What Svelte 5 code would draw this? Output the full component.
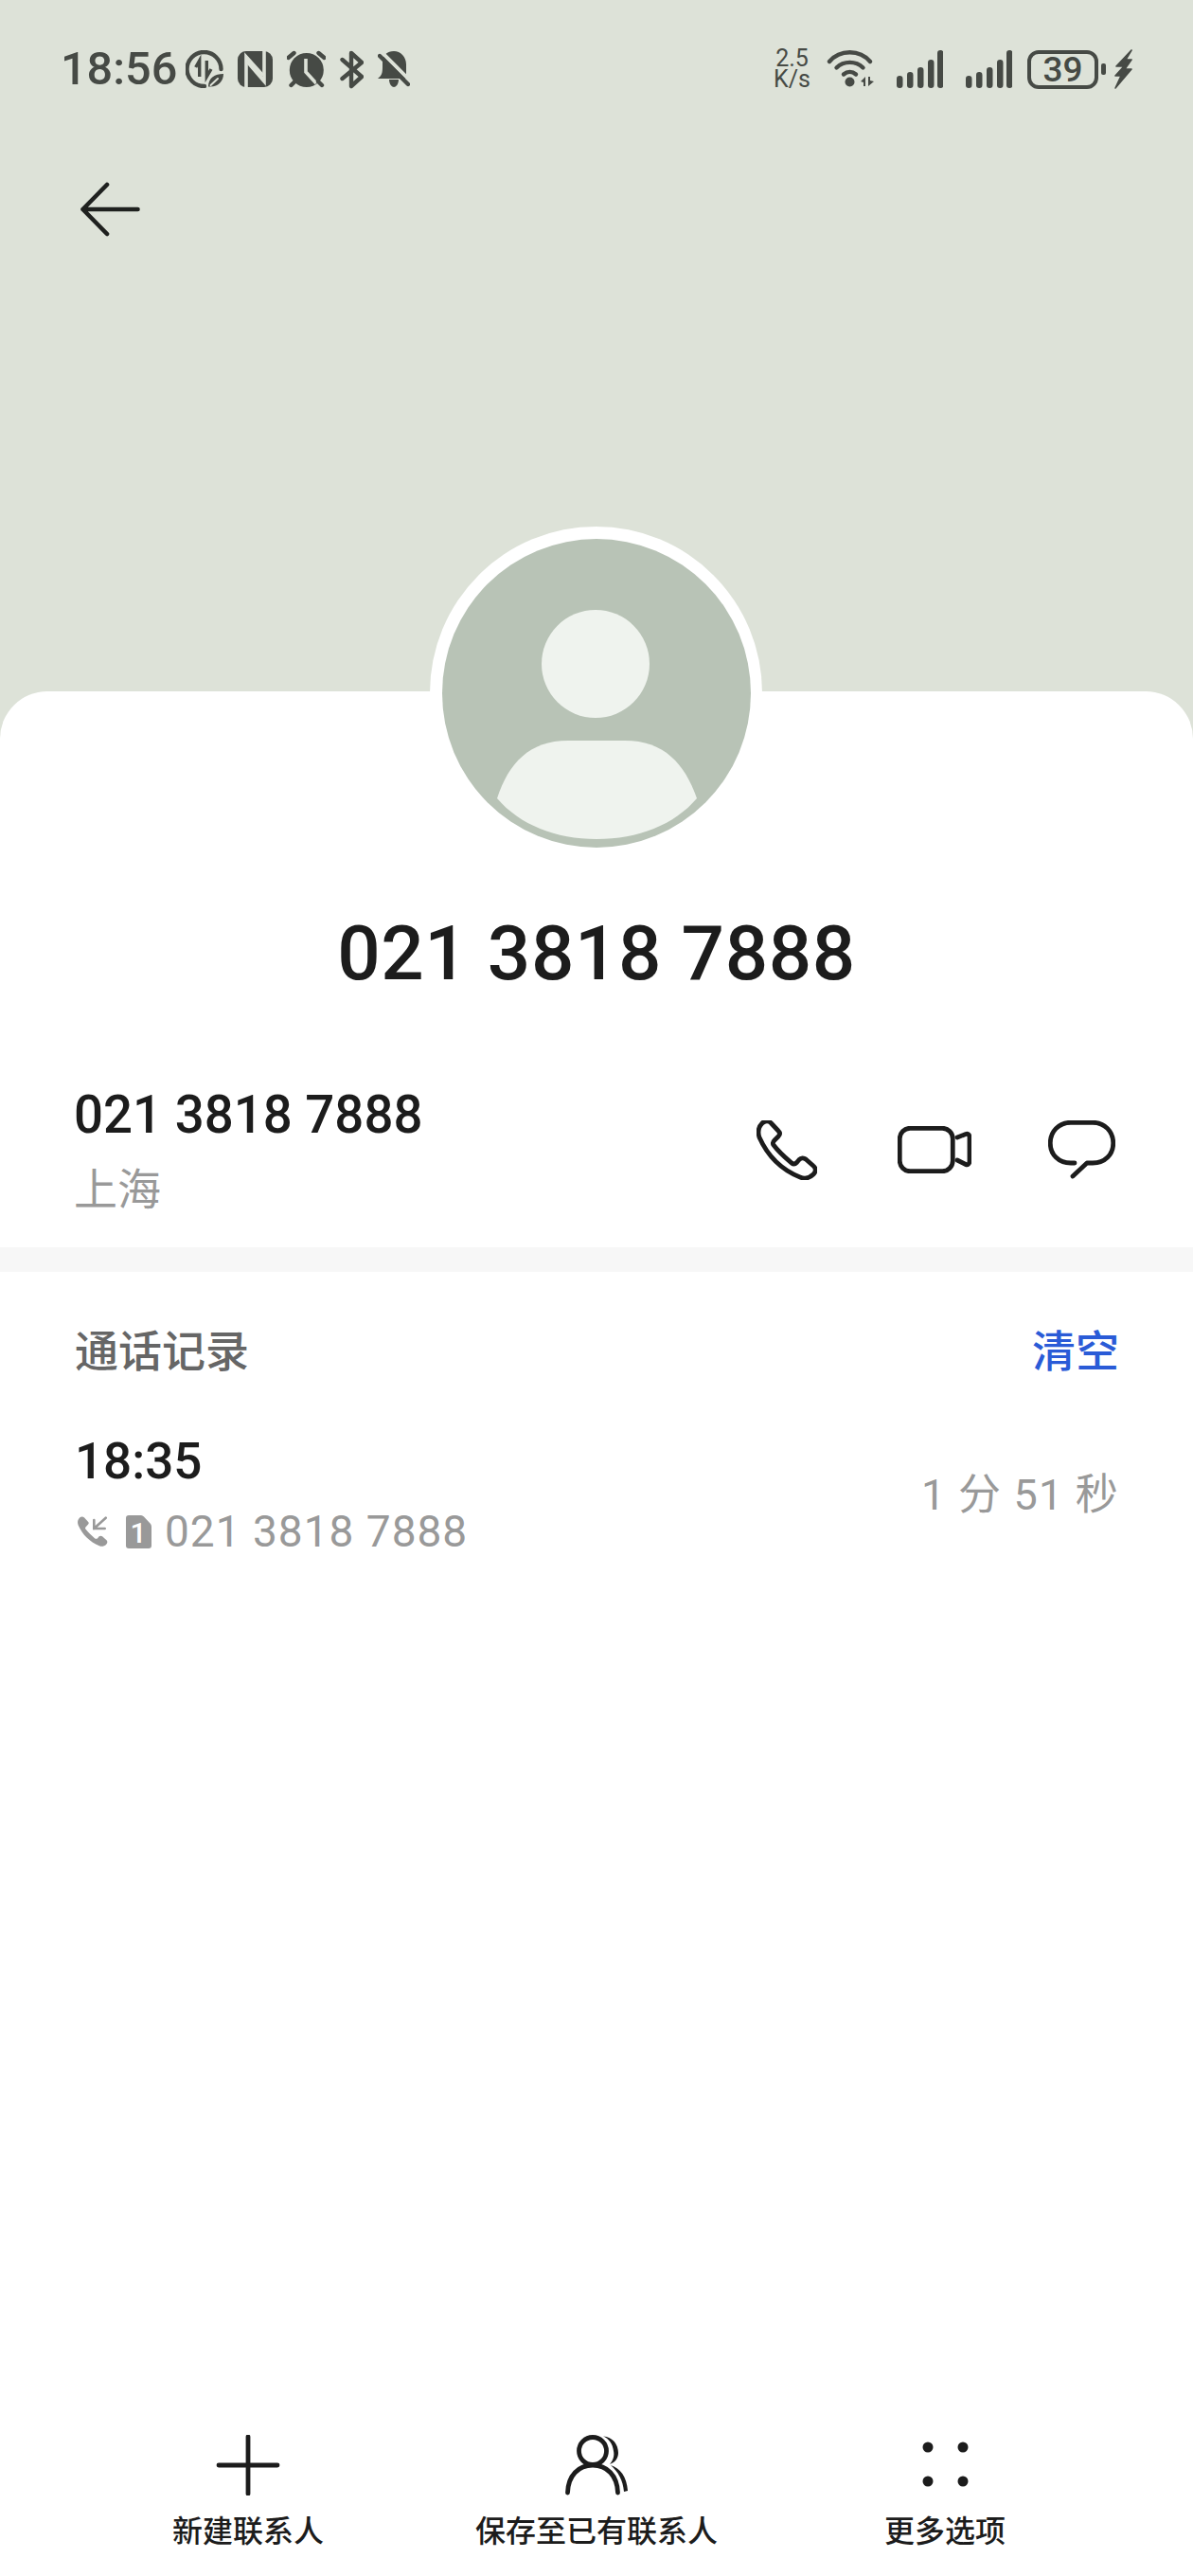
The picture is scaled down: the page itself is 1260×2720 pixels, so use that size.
<script>
	const handset =
		'M6 3C9 0 13 0 15.5 3L23 11C25 13 25 15 23 17L19 21C17 23 17 25 18 26C24 34 30 39 37 45C39 46.5 41 46 42.5 44.5L45 41.5C47 39.5 50 39.5 52 41L60 48C63 50.5 63 54 60 57C56 61 51 62 46 60C26 52 12 38 3 18C1 12 2 7 6 3Z';
	const signalBars = [
		{ x: 0, h: 13 },
		{ x: 11, h: 17 },
		{ x: 22, h: 22 },
		{ x: 33, h: 30 },
		{ x: 43, h: 40 }
	];
	const actions = [
		{ id: 'new', label: '新建联系人' },
		{ id: 'save', label: '保存至已有联系人' },
		{ id: 'more', label: '更多选项' }
	];
	const number = '021 3818 7888';
</script>

{#snippet signal()}
	<svg class="ink" width="49" height="40" viewBox="0 0 49 40">
		{#each signalBars as bar}
			<rect x={bar.x} y={40 - bar.h} width="6.5" height={bar.h} rx="3.2" />
		{/each}
	</svg>
{/snippet}

<div class="page">
	<header class="top">
		<div class="status">
			<span class="clock">18:56</span>
			<svg class="saver" width="40" height="40" viewBox="0 0 40 40">
				<path class="line" d="M37.5 20A18 18 0 1 0 20 38" />
				<path class="line thin" d="M10.7 18L14.7 11V28" />
				<path class="line thin" d="M22.3 11V28L27 20" />
				<path class="solid" d="M24 38.5C24 29 31 25 40 25C40 33 34 39.5 24 38.5Z" />
				<path class="cut" d="M26.5 37L34 30" />
			</svg>
			<svg class="nfc" width="37" height="38" viewBox="0 0 37 38">
				<rect class="solid" width="37" height="38" rx="9" />
				<path class="cut wide" d="M9 38V6L27 26" />
				<path class="cut wide" d="M28 0V32L10 11" />
			</svg>
			<svg class="alarm" width="41" height="40" viewBox="0 0 41 40">
				<circle class="solid" cx="20.8" cy="21" r="18" />
				<path class="cut wide" d="M20 9V23L31 35" />
				<path class="line" d="M1.5 8L7.5 3M39.5 8L33.5 3" />
				<path class="line" d="M4.5 37L8.5 33M37 37L33 33" />
			</svg>
			<svg class="bt" width="25" height="41" viewBox="0 0 25 41">
				<path class="line" d="M2.5 10L23 28L12 38V3L23 13L2.5 30" />
			</svg>
			<svg class="bell" width="34" height="40" viewBox="0 0 34 40">
				<path class="solid" d="M17 1C24 1 30 7 30 15V30H0C4 27 5 24 5 18V10C5 6 10 1 17 1Z" />
				<path class="solid" d="M12 31H22C22 36 19 39 17 39C15 39 12 36 12 31Z" />
				<path class="cut wider" d="M0 -2L40 38" />
				<path class="line" d="M2 6L32 36" />
			</svg>

			<span class="speed"><span>2.5</span><span>K/s</span></span>
			<svg class="wifi" width="50" height="40" viewBox="0 0 50 40">
				<path class="line" d="M3 12C14 -1 35 -1 46 12" />
				<path class="line" d="M10.5 18.5C18 11 31 11 38.5 18.5" />
				<path class="line" d="M18 25.5C22 22 27 22 31 25.5" />
				<circle class="solid" cx="24.5" cy="33.5" r="5" />
				<path class="solid" d="M36 33L41 28V38H39V34ZM44 28H46V32L50 33L44 38Z" />
			</svg>
			{@render signal()}
			{@render signal()}
			<span class="battery">39</span>
			<span class="nub"></span>
			<svg class="bolt" width="19" height="42" viewBox="0 0 19 42">
				<path class="solid bolt-shape" d="M18 1L2 18H10L1 28H7L1 41L18 21H11L18 11H12Z" />
			</svg>
		</div>

		<button class="back" aria-label="返回">
			<svg width="63" height="58" viewBox="0 0 63 58">
				<path d="M28 3L2.5 29L28 55M2.5 29H60.5" />
			</svg>
		</button>
	</header>

	<main class="card">
		<div class="avatar-ring">
			<svg class="avatar" width="326" height="326" viewBox="0 0 326 326">
				<circle cx="163" cy="163" r="163" fill="#b8c3b6" />
				<circle cx="162" cy="132" r="57" fill="#eff3ee" />
				<path
					d="M58 274C70 237 92 213 133 213H193C234 213 256 237 269 274C245 302 207 317 163 317C120 317 82 302 58 274Z"
					fill="#eff3ee"
				/>
			</svg>
		</div>

		<h1>{number}</h1>

		<section class="contact">
			<div>
				<div class="phone">{number}</div>
				<div class="place">上海</div>
			</div>
			<div class="contact-actions">
				<svg class="stroke" width="64" height="63" viewBox="0 0 64 63">
					<path d={handset} />
				</svg>
				<svg class="stroke video" width="78" height="50" viewBox="0 0 78 50">
					<rect x="2.25" y="2.25" width="56" height="45.5" rx="11" />
					<path d="M63 12L72 8.5C75 7.5 76 10 76 12V37C76 40 74 41.5 72 40.5L63 36" />
				</svg>
				<svg class="stroke chat" width="71" height="62" viewBox="0 0 71 62">
					<path d="M28 45H24C11 45 2.25 36 2.25 24C2.25 12 11 2.25 24 2.25H47C60 2.25 68.75 12 68.75 24C68.75 36 60 45 47 45H41L26 59" />
				</svg>
			</div>
		</section>

		<div class="divider"></div>

		<section class="log">
			<div class="log-head">
				<h2>通话记录</h2>
				<span class="clear">清空</span>
			</div>
			<div class="log-row">
				<div>
					<div class="log-time">18:35</div>
					<div class="log-number">
						<svg class="incoming" width="33" height="33" viewBox="0 0 33 33">
							<path d={handset} transform="scale(.52)" />
							<path class="arrow" d="M30.7 1.7L18.3 13M18.3 4V13H29.7" />
						</svg>
						<svg class="sim" width="27" height="35" viewBox="0 0 27 35">
							<path d="M3 0H16C17 0 18 .5 19 1.5L26 9C26.7 10 27 11 27 12V32C27 34 26 35 24 35H3C1 35 0 34 0 32V3C0 1 1 0 3 0Z" />
							<text x="13" y="29" text-anchor="middle">1</text>
						</svg>
						<span>{number}</span>
					</div>
				</div>
				<div class="duration">1 分 51 秒</div>
			</div>
		</section>
	</main>

	<nav class="actions">
		{#each actions as action}
			<button>
				<svg class="stroke" width="70" height="64" viewBox="0 0 70 64">
					{#if action.id === 'new'}
						<path d="M35 2V62M4 32H66" />
					{:else if action.id === 'save'}
						<circle cx="31" cy="17" r="14.5" />
						<path d="M4.5 61C5 43 16 32 31 32C46 32 57 43 57.5 61" />
						<path class="crescent" d="M42 1.5C52 2 58 10 58 19C58 24 55 29 49 31C53 26 54 22 53 17C52 9 48 4 42 1.5Z" />
						<path class="crescent" d="M50 32C60 35 67 44 68 59L64 60C63 48 58 39 50 32Z" />
					{:else}
						<circle class="dot" cx="17" cy="13" r="5.5" />
						<circle class="dot" cx="54" cy="13" r="5.5" />
						<circle class="dot" cx="17" cy="49" r="5.5" />
						<circle class="dot" cx="54" cy="49" r="5.5" />
					{/if}
				</svg>
				<span>{action.label}</span>
			</button>
		{/each}
	</nav>
</div>

<style>
	:global(body) {
		background: #fff;
	}

	.page {
		display: flex;
		flex-direction: column;
		min-height: 2720px;
		background: #dde2d8;
		font-family: Roboto, 'Noto Sans CJK SC', sans-serif;
		color: #1c1c1c;
	}

	.top {
		height: 730px;
		box-sizing: border-box;
		padding-top: 51px;
	}

	.status {
		display: flex;
		align-items: center;
		height: 44px;
		padding: 0 64px 0 64px;
		color: #464a45;
	}

	.clock {
		width: 122px;
		margin-right: 10px;
		font-size: 48.6px;
		font-weight: 500;
		line-height: 44px;
	}

	.status svg {
		flex: none;
	}

	.solid {
		fill: #464a45;
	}

	.bolt-shape {
		stroke: #464a45;
		stroke-width: 1.6;
		stroke-linejoin: round;
	}

	.line {
		fill: none;
		stroke: #464a45;
		stroke-width: 4.4;
		stroke-linecap: round;
		stroke-linejoin: round;
	}

	.line.thin {
		stroke-width: 3.4;
		stroke-linecap: butt;
		stroke-linejoin: miter;
	}

	.cut {
		fill: none;
		stroke: #dde2d8;
		stroke-width: 2;
		stroke-linecap: round;
	}

	.cut.wide {
		stroke-width: 3.6;
		stroke-linecap: butt;
	}

	.cut.wider {
		stroke-width: 4;
		stroke-linecap: butt;
	}

	.ink {
		fill: #464a45;
		margin-left: 24px;
	}

	.nfc,
	.alarm,
	.bt,
	.bell {
		margin-left: 15px;
	}

	.speed {
		display: flex;
		flex-direction: column;
		align-items: center;
		margin-left: auto;
		font-size: 25px;
		line-height: 22px;
	}

	.wifi {
		margin-left: 17px;
	}

	.battery {
		box-sizing: border-box;
		width: 75px;
		height: 41px;
		margin-left: 16px;
		border: 4px solid #464a45;
		border-radius: 12px;
		font-size: 37px;
		font-weight: 500;
		line-height: 33px;
		text-align: center;
	}

	.nub {
		width: 5px;
		height: 12px;
		margin-left: 3px;
		border-radius: 2px;
		background: #464a45;
	}

	.bolt {
		margin-left: 9px;
	}

	button {
		padding: 0;
		border: 0;
		background: none;
		font: inherit;
		color: inherit;
	}

	.back {
		display: block;
		margin: 97px 0 0 85px;
		width: 63px;
		height: 58px;
	}

	.back svg {
		display: block;
		fill: none;
		stroke: #1f211f;
		stroke-width: 4.6;
		stroke-linecap: round;
		stroke-linejoin: round;
	}

	.card {
		display: flex;
		flex: 1;
		flex-direction: column;
		border-radius: 50px 50px 0 0;
		background: #fff;
	}

	.avatar-ring {
		display: flex;
		align-items: center;
		justify-content: center;
		width: 351px;
		height: 351px;
		margin: -174px 0 0 454px;
		border-radius: 50%;
		background: #fff;
	}

	.avatar {
		display: block;
	}

	h1 {
		margin: 55px 0 0;
		font-size: 80px;
		font-weight: 500;
		line-height: 90px;
		text-align: center;
		letter-spacing: 0.6px;
	}

	.contact {
		display: flex;
		align-items: center;
		justify-content: space-between;
		padding: 90px 82px 31px 78px;
	}

	.phone {
		font-size: 54.6px;
		font-weight: 500;
		line-height: 70px;
	}

	.place {
		margin-top: 14px;
		font-size: 46px;
		line-height: 60px;
		color: #999;
	}

	.contact-actions {
		display: flex;
		align-items: center;
	}

	.video {
		margin-left: 85px;
	}

	.chat {
		margin-left: 81px;
	}

	.stroke {
		display: block;
		fill: none;
		stroke: #1c1c1c;
		stroke-width: 4.8;
		stroke-linecap: round;
		stroke-linejoin: round;
	}

	.divider {
		height: 26px;
		background: #f7f7f7;
	}

	.log {
		padding: 54px 78px 0 79px;
	}

	.log-head,
	.log-row {
		display: flex;
		align-items: center;
		justify-content: space-between;
	}

	h2 {
		margin: 0;
		font-size: 46px;
		font-weight: 500;
		line-height: 60px;
		color: #666;
	}

	.clear {
		font-size: 46px;
		font-weight: 500;
		line-height: 60px;
		color: #2a5bd7;
	}

	.log-row {
		margin-top: 56px;
	}

	.log-time {
		font-size: 53px;
		font-weight: 500;
		line-height: 60px;
	}

	.log-number {
		display: flex;
		align-items: center;
		margin-top: 14px;
		font-size: 46px;
		line-height: 60px;
		letter-spacing: 1px;
		color: #999;
	}

	.incoming {
		margin-left: 2px;
		margin-right: 19px;
		fill: #999;
	}

	.incoming .arrow {
		fill: none;
		stroke: #999;
		stroke-width: 2.6;
		stroke-linecap: round;
	}

	.sim {
		margin-right: 14px;
		fill: #999;
	}

	.sim text {
		fill: #fff;
		font-size: 30px;
		font-weight: 500;
		letter-spacing: 0;
	}

	.duration {
		margin-bottom: 2px;
		font-size: 45px;
		line-height: 60px;
		letter-spacing: 1.2px;
		color: #999;
	}

	.actions {
		display: grid;
		grid-template-columns: repeat(3, 368px);
		justify-content: center;
		margin-top: auto;
		padding-bottom: 27px;
		background: #fff;
	}

	.actions button {
		display: flex;
		flex-direction: column;
		align-items: center;
		gap: 18px;
		font-size: 32px;
		font-weight: 500;
		line-height: 40px;
	}

	.crescent {
		fill: #1c1c1c;
		stroke: none;
	}

	.dot {
		fill: #1c1c1c;
		stroke: none;
	}
</style>
